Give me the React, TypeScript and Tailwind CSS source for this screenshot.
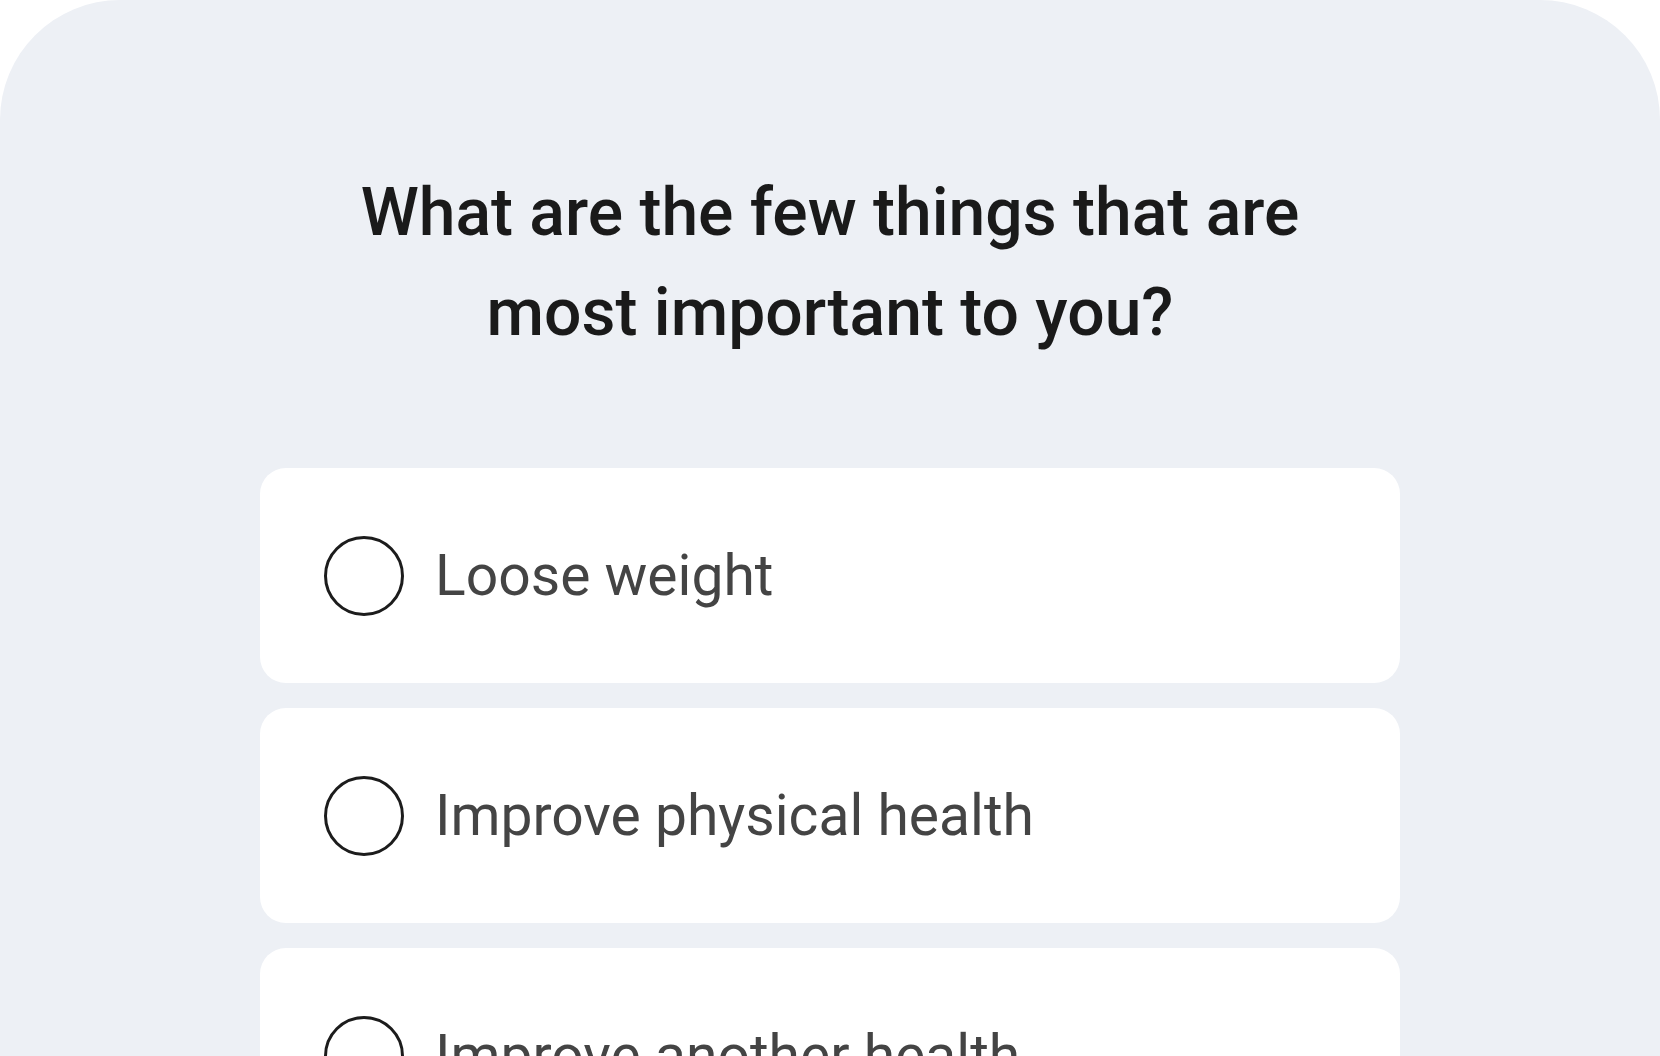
const options = ["Loose weight", "Improve physical health", "Improve another health"];

function Option({ label }: { label: string }) {
  return (
    <div className="flex h-[215px] shrink-0 items-center gap-[31px] rounded-[26px] bg-white pl-[64px]">
      <span className="h-[80px] w-[80px] shrink-0 rounded-full border-[3px] border-[#1c1c1c]" />
      <span className="text-[57px] leading-none text-[#444444]">{label}</span>
    </div>
  );
}

export default function App() {
  return (
    <div className="h-[1056px] overflow-hidden bg-white font-['Roboto',sans-serif]">
      <div className="flex h-full flex-col rounded-t-[120px] bg-[#edf0f5] pt-[163px]">
        <h1 className="mx-auto max-w-[1020px] text-center text-[66px] font-medium leading-[100px] text-[#1a1a1a]">
          What are the few things that are most important to you?
        </h1>

        <div className="mx-auto mt-[105px] flex w-[1140px] flex-col gap-[25px]">
          {options.map((o) => (
            <Option key={o} label={o} />
          ))}
        </div>
      </div>
    </div>
  );
}
